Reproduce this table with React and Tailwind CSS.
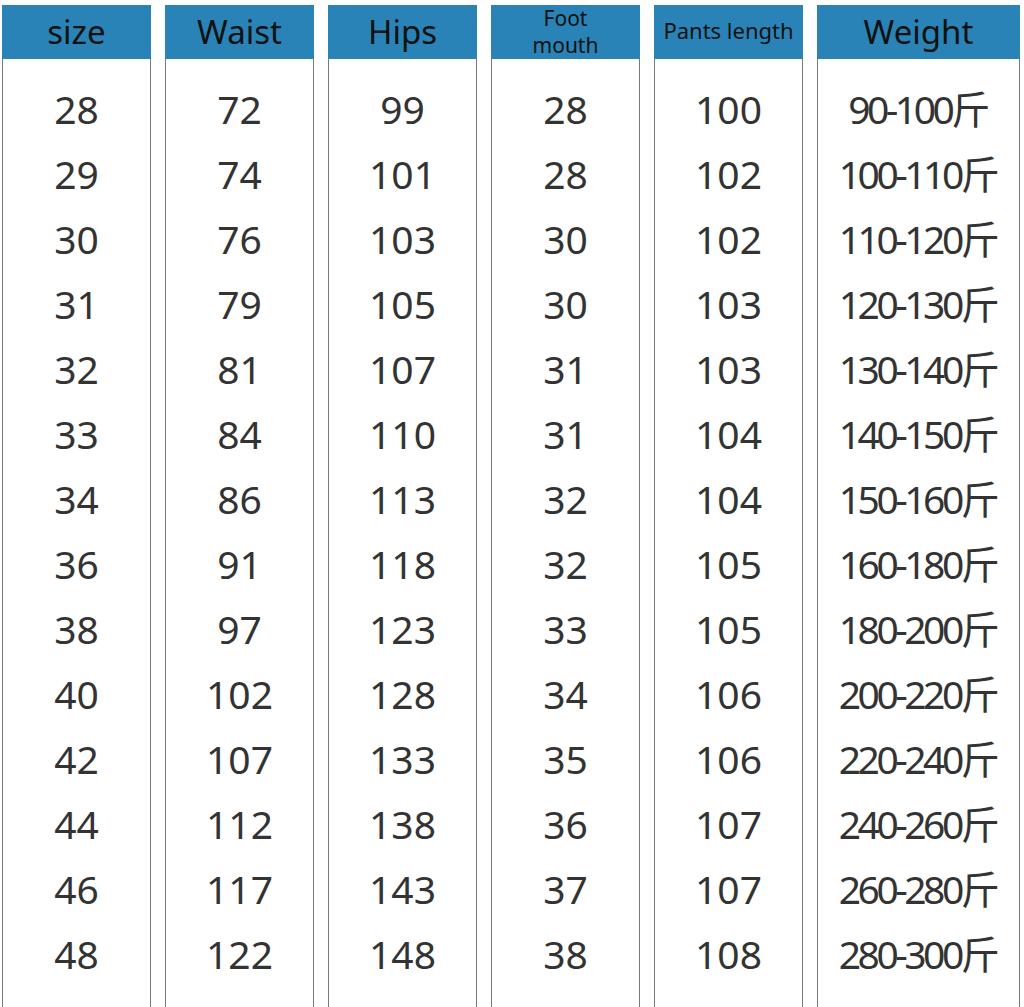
import React from "react";

const columns = [
  { key: "size", title: "size", values: ["28", "29", "30", "31", "32", "33", "34", "36", "38", "40", "42", "44", "46", "48"] },
  { key: "waist", title: "Waist", values: ["72", "74", "76", "79", "81", "84", "86", "91", "97", "102", "107", "112", "117", "122"] },
  { key: "hips", title: "Hips", values: ["99", "101", "103", "105", "107", "110", "113", "118", "123", "128", "133", "138", "143", "148"] },
  { key: "foot", title: "Foot mouth", values: ["28", "28", "30", "30", "31", "31", "32", "32", "33", "34", "35", "36", "37", "38"] },
  { key: "pants", title: "Pants length", values: ["100", "102", "102", "103", "103", "104", "104", "105", "105", "106", "106", "107", "107", "108"] },
  {
    key: "weight",
    title: "Weight",
    values: ["90-100斤", "100-110斤", "110-120斤", "120-130斤", "130-140斤", "140-150斤", "150-160斤", "160-180斤", "180-200斤", "200-220斤", "220-240斤", "240-260斤", "260-280斤", "280-300斤"],
  },
];

function Header({ col }) {
  if (col.key === "foot") {
    return (
      <div className="h-[54px] bg-[#2983b6] flex flex-col items-center justify-center text-[21px] leading-[27px] text-[#111]">
        <span>Foot</span>
        <span>mouth</span>
      </div>
    );
  }
  if (col.key === "pants") {
    return (
      <div className="h-[54px] bg-[#2983b6] flex items-center justify-center text-[22px] text-[#111] pb-[4px]">
        {col.title}
      </div>
    );
  }
  return (
    <div className="h-[54px] bg-[#2983b6] flex items-center justify-center text-[33px] leading-none text-[#111] pb-[2px]">
      {col.title}
    </div>
  );
}

export default function App() {
  return (
    <div
      className="w-[1024px] h-[1007px] bg-white flex gap-[14px] pt-[5px] pl-[2px] overflow-hidden"
      style={{ fontFamily: '"Noto Sans", "Noto Sans CJK SC", sans-serif' }}
    >
      {columns.map((col) => (
        <div key={col.key} className={`flex flex-col ${col.key === "weight" ? "w-[203px]" : "w-[149px]"}`}>
          <Header col={col} />
          {/* body */}
          <div className="flex-1 border-x border-[#7a7a7a] pt-[17px]">
            {col.values.map((v, i) => (
              <div
                key={i}
                className={`h-[65px] flex items-center justify-center leading-none text-[#333] text-[39px] ${
                  col.key === "weight" ? "tracking-[-3.5px] pr-[2px]" : ""
                }`}
              >
                {v}
              </div>
            ))}
          </div>
        </div>
      ))}
    </div>
  );
}
